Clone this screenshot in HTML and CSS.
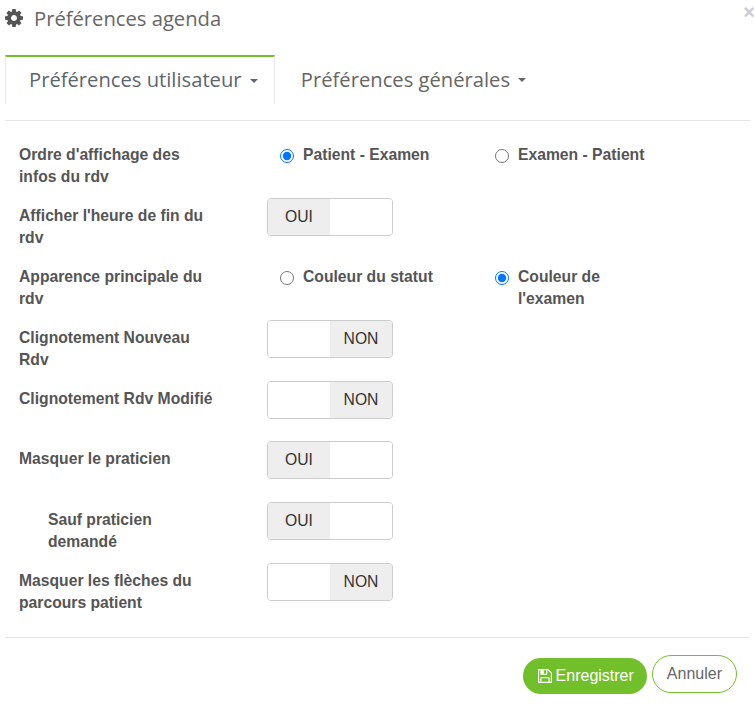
FILE: index.html
```html
<!DOCTYPE html>
<html lang="fr">
<head>
<meta charset="utf-8">
<title>Préférences agenda</title>
<link rel="stylesheet" href="styles.css">
</head>
<body>
<div class="modal">
  <header class="modal-head">
    <svg class="gear" viewBox="128 128 1536 1536" aria-hidden="true"><path d="M1152 896q0-106-75-181t-181-75-181 75-75 181 75 181 181 75 181-75 75-181zm512-109v222q0 12-8 23t-20 13l-185 28q-19 54-39 91 35 50 107 138 10 12 10 25t-9 23q-27 37-99 108t-94 71q-12 0-26-9l-138-108q-44 23-91 38-16 136-29 186-7 28-36 28h-222q-14 0-24.5-8.5t-11.500-21.500l-28-184q-49-16-90-37l-141 107q-10 9-25 9-14 0-25-11-126-114-165-168-7-10-7-23 0-12 8-23 15-21 51-66.500t54-70.500q-27-50-41-99l-183-27q-13-2-21-12.500t-8-23.500v-222q0-12 8-23t19-13l186-28q14-46 39-92-40-57-107-138-10-12-10-24 0-10 9-23 26-36 98.500-107.500t94.500-71.500q13 0 26 10l138 107q44-23 91-38 16-136 29-186 7-28 36-28h222q14 0 24.500 8.500t11.500 21.500l28 184q49 16 90 37l142-107q9-9 24-9 13 0 25 10 129 119 165 170 7 8 7 22 0 12-8 23-15 21-51 66.500t-54 70.500q26 50 41 98l183 28q13 2 21 12.500t8 23.500z"/></svg>
    <h1 class="title">Préférences agenda</h1>
    <span class="close">×</span>
  </header>
  <nav class="tabs">
    <a class="tab active">Préférences utilisateur <i class="caret"></i></a>
    <a class="tab">Préférences générales <i class="caret"></i></a>
  </nav>
  <form class="form">
    <div class="row">
      <div class="label">Ordre d'affichage des infos du rdv</div>
      <div class="radios">
        <label class="radio"><input type="radio" name="a" checked><span>Patient - Examen</span></label>
        <label class="radio"><input type="radio" name="a"><span>Examen - Patient</span></label>
      </div>
    </div>
    <div class="row">
      <div class="label">Afficher l'heure de fin du rdv</div>
      <div class="switch"><span class="on">OUI</span><span class="blank"></span></div>
    </div>
    <div class="row">
      <div class="label">Apparence principale du rdv</div>
      <div class="radios">
        <label class="radio"><input type="radio" name="b"><span>Couleur du statut</span></label>
        <label class="radio"><input type="radio" name="b" checked><span>Couleur de l'examen</span></label>
      </div>
    </div>
    <div class="row">
      <div class="label">Clignotement Nouveau Rdv</div>
      <div class="switch"><span class="blank"></span><span class="on">NON</span></div>
    </div>
    <div class="row">
      <div class="label">Clignotement Rdv Modifié</div>
      <div class="switch"><span class="blank"></span><span class="on">NON</span></div>
    </div>
    <div class="row">
      <div class="label">Masquer le praticien</div>
      <div class="switch"><span class="on">OUI</span><span class="blank"></span></div>
    </div>
    <div class="row">
      <div class="label indented">Sauf praticien demandé</div>
      <div class="switch"><span class="on">OUI</span><span class="blank"></span></div>
    </div>
    <div class="row">
      <div class="label">Masquer les flèches du parcours patient</div>
      <div class="switch"><span class="blank"></span><span class="on">NON</span></div>
    </div>
  </form>
  <footer class="foot">
    <button class="btn primary" type="button">
      <svg class="save" viewBox="128 128 1536 1536" aria-hidden="true"><path d="M512 1536h768v-384h-768v384zm896 0h128v-896q0-14-10-38.500t-20-34.500l-281-281q-10-10-34-20t-39-10v416q0 40-28 68t-68 28h-576q-40 0-68-28t-28-68v-416h-128v1280h128v-416q0-40 28-68t68-28h832q40 0 68 28t28 68v416zm-384-928v-320q0-13-9.500-22.500t-22.500-9.500h-192q-13 0-22.500 9.500t-9.500 22.500v320q0 13 9.500 22.500t22.500 9.500h192q13 0 22.500-9.500t9.500-22.500zm640 32v928q0 40-28 68t-68 28h-1344q-40 0-68-28t-28-68v-1344q0-40 28-68t68-28h928q40 0 88 20t76 48l280 280q28 28 48 76t20 88z"/></svg>Enregistrer</button>
    <button class="btn ghost" type="button">Annuler</button>
  </footer>
</div>
</body>
</html>
```
FILE: styles.css
```css
* { box-sizing: border-box; }
html, body { margin: 0; padding: 0; background: #fff; }
body { width: 755px; height: 705px; overflow: hidden; font-family: "Liberation Sans", Arial, sans-serif; color: #555; }

.modal { position: relative; padding: 0 5px; }

.modal-head { display: flex; align-items: center; height: 36px; }
.gear { width: 18px; height: 18px; fill: #555; flex: none; margin-right: 11px; }
.title { margin: 0; font: 400 20.2px/24px "Open Sans", sans-serif; color: #666; }
.close { position: absolute; top: 2px; right: 0; font: 700 20px/20px "Liberation Sans", sans-serif; color: #ccc; }

.tabs { display: flex; height: 66px; margin-top: 19px; border-bottom: 1px solid #e5e5e5; align-items: flex-start; }
.tab { display: flex; align-items: center; height: 49px; padding: 0 26px 2px 26px; font: 400 20.2px/26px "Open Sans", sans-serif; color: #666; white-space: pre; }
.tab.active { border-top: 2px solid #72bf2c; border-left: 1px solid #e8e8e8; border-right: 1px solid #e8e8e8; padding: 0 16px 3px 23px; color: #5c6670; }
.caret { display: inline-block; width: 0; height: 0; margin-left: 3px; margin-top: 3px; border-top: 4px solid currentColor; border-left: 4px solid transparent; border-right: 4px solid transparent; }

.form { padding: 16.4px 0 0 14px; }
.row { display: flex; align-items: flex-start; min-height: 60.8px; }
.label { width: 200px; flex: none; padding-top: 7px; margin-right: 48px; font-size: 15.7px; font-weight: 700; line-height: 22px; color: #555; }
.label.indented { padding-left: 29px; padding-right: 30px; }

.radios { display: flex; padding-top: 7px; }
.radio { display: flex; width: 215px; padding-left: 14px; font-size: 15.7px; font-weight: 700; line-height: 22px; color: #555; }
.radio span { max-width: 135px; }
.radio input { width: 14px; height: 14px; flex: none; margin: 5px 9px 0 -1px; }

.switch { display: flex; width: 126px; height: 38px; border: 1px solid #ccc; border-radius: 4px; overflow: hidden; font-size: 15.7px; color: #333; }
.switch span { width: 50%; display: flex; align-items: center; justify-content: center; }
.switch .on { background: #eee; }
.switch .blank { background: #fff; }

.foot { display: flex; justify-content: flex-end; gap: 5px; margin-top: 13px; border-top: 1px solid #e5e5e5; padding: 17px 13px 0 0; height: 68px; align-items: flex-start; }
.btn { font: 400 16px/20px "Liberation Sans", sans-serif; border-radius: 19px; cursor: pointer; }
.primary { display: flex; align-items: center; gap: 4px; height: 36px; margin-top: 3px; padding: 0 13px 0 15px; background: #72bf2c; border: 0; color: #fff; }
.save { width: 14px; height: 14px; fill: currentColor; flex: none; }
.ghost { height: 38px; padding: 0 14px; background: #fff; border: 1px solid #72bf2c; color: #666; }
```
